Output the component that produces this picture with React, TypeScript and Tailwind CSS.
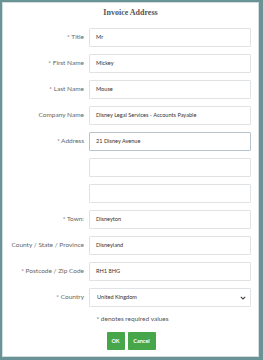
import React from "react";

const rows: { label: string; value: string; focus?: boolean }[] = [
  { label: "* Title", value: "Mr" },
  { label: "* First Name", value: "Mickey" },
  { label: "* Last Name", value: "Mouse" },
  { label: "Company Name", value: "Disney Legal Services - Accounts Payable" },
  { label: "* Address", value: "21 Disney Avenue", focus: true },
  { label: "", value: "" },
  { label: "", value: "" },
  { label: "* Town:", value: "Disneyton" },
  { label: "County / State / Province", value: "Disneyland" },
  { label: "* Postcode / Zip Code", value: "RH1 8HG" },
];

export default function App() {
  return (
    <div className="w-[263px] h-[360px] bg-[#6a9396] pt-[2px] pl-[2px] pr-[4px] pb-[3px] flex" style={{ fontFamily: "Lato, 'Open Sans', sans-serif" }}>
      <div className="flex-1 bg-white border border-[#d3dcdf] flex flex-col">
        <div className="pt-[4px] h-[16px] leading-[12px] text-center text-[8px] font-bold text-[#555]" style={{ fontFamily: "'Liberation Serif', serif" }}>
          Invoice Address
        </div>
        <div className="mt-[9px] flex flex-col gap-[7px]">
          {rows.map((r, i) => (
            <div key={i} className="flex items-center h-[19px]">
              <div className="w-[81px] text-right text-[6.5px] text-[#666] leading-none">{r.label}</div>
              <div className={`ml-[5px] w-[162px] h-[19px] border ${r.focus ? "border-[#b7c3cd]" : "border-[#dfe3e6]"} rounded-[1px] flex items-center pl-[6px] text-[5.6px] text-[#333]`}>
                {r.value}
              </div>
            </div>
          ))}
          <div className="flex items-center h-[19px]">
            <div className="w-[81px] text-right text-[6.5px] text-[#666] leading-none">* Country</div>
            <div className="ml-[5px] w-[162px] h-[19px] border border-[#dfe3e6] rounded-[1px] flex items-center pl-[7px] pr-[4px] text-[5.6px] text-[#333] justify-between">
              <span>United Kingdom</span>
              <svg width="6" height="4" viewBox="0 0 6 4">
                <path d="M0.8 0.8 L3 3 L5.2 0.8" fill="none" stroke="#444" strokeWidth="1.1" />
              </svg>
            </div>
          </div>
        </div>
        <div className="mt-[7px] h-[10px] leading-[10px] text-center text-[6.5px] text-[#555] pl-[4px]">* denotes required values</div>
        <div className="mt-[8px] flex justify-center gap-[3px] pl-[1px]">
          <div className="w-[18px] h-[18px] bg-[#46a649] rounded-[1px] flex items-center justify-center text-white text-[5.5px] font-bold">OK</div>
          <div className="w-[28px] h-[18px] bg-[#46a649] rounded-[1px] flex items-center justify-center text-white text-[5.5px] font-bold">Cancel</div>
        </div>
      </div>
    </div>
  );
}
